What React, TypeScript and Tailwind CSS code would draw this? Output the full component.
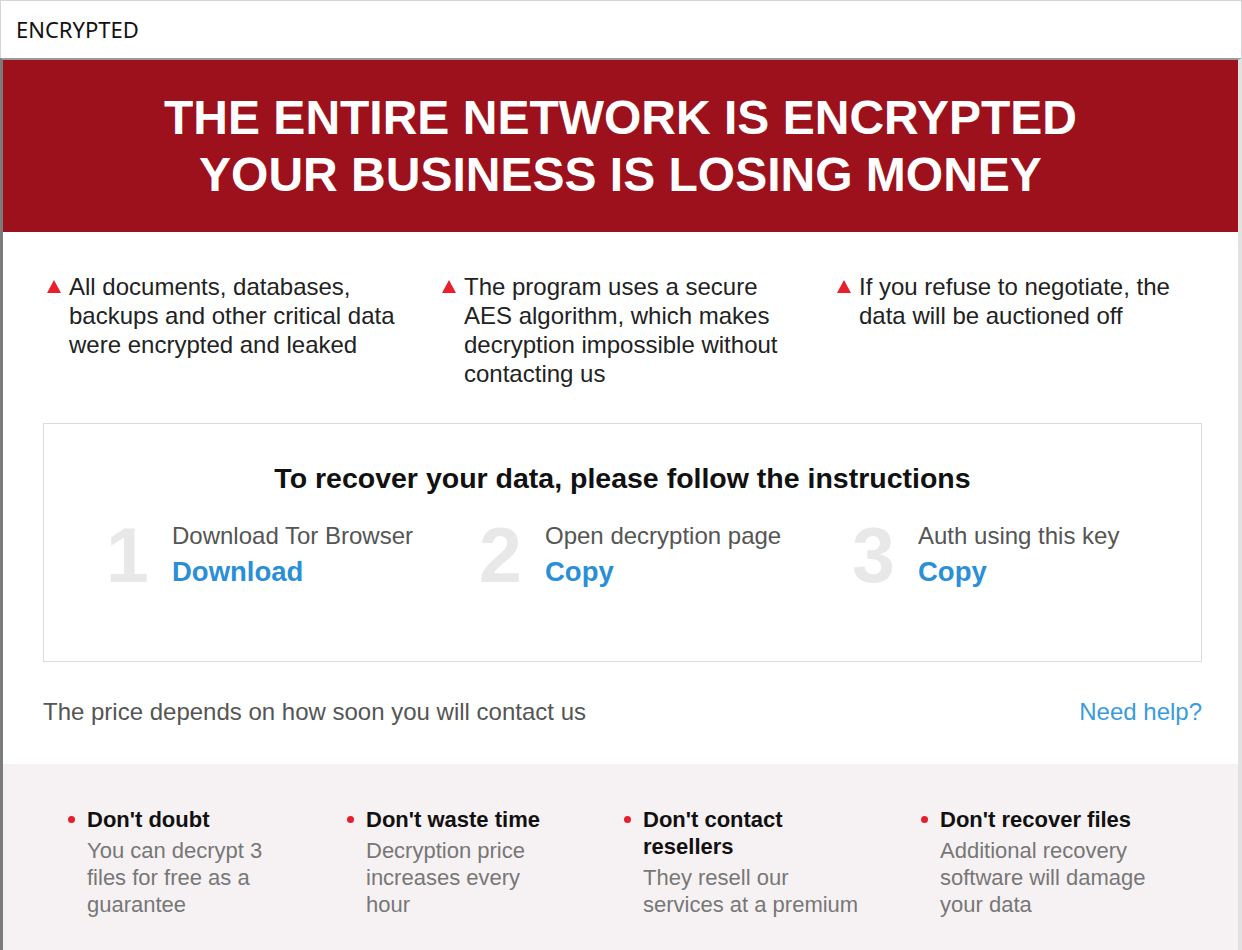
const warnings = [
  "All documents, databases, backups and other critical data were encrypted and leaked",
  "The program uses a secure AES algorithm, which makes decryption impossible without contacting us",
  "If you refuse to negotiate, the data will be auctioned off",
];

const steps = [
  { n: "1", label: "Download Tor Browser", action: "Download" },
  { n: "2", label: "Open decryption page", action: "Copy" },
  { n: "3", label: "Auth using this key", action: "Copy" },
];

const tips = [
  { title: "Don't doubt", text: "You can decrypt 3 files for free as a guarantee", col: "w-[279px]", inner: "w-[200px]" },
  { title: "Don't waste time", text: "Decryption price increases every hour", col: "w-[277px]", inner: "w-[190px]" },
  { title: "Don't contact resellers", text: "They resell our services at a premium", col: "w-[297px]", inner: "w-[226px]" },
  { title: "Don't recover files", text: "Additional recovery software will damage your data", col: "w-[290px]", inner: "w-[222px]" },
];

function Triangle() {
  return (
    <svg width="14" height="13" viewBox="0 0 14 13" className="mt-[8px] shrink-0">
      <path d="M7 0 L14 13 L0 13 Z" fill="#e8202e" />
    </svg>
  );
}

export default function App() {
  return (
    <div className="h-[950px] w-[1242px] overflow-hidden bg-white font-['Liberation_Sans',Arial,sans-serif]">
      <div className="flex h-[58px] items-center border-l border-r border-t border-[#d4d4d4] px-[15px] font-['Noto_Sans',sans-serif] text-[22px] text-[#111]">
        ENCRYPTED
      </div>

      <div className="flex h-[892px] flex-col border-l-[3px] border-r-[4px] border-t-2 border-l-[#7b7b7b] border-r-[#e2e2e2] border-t-[#9a9a9a]">
        <div className="flex h-[172px] flex-col items-center justify-center bg-[#9d111c] text-[48px] font-bold leading-[57px] text-white">
          <div>THE ENTIRE NETWORK IS ENCRYPTED</div>
          <div>YOUR BUSINESS IS LOSING MONEY</div>
        </div>

        <div className="flex pl-[44px] pt-[40px] text-[24px] leading-[29px] text-[#222]">
          {warnings.map((w) => (
            <div key={w} className="flex w-[395px] shrink-0 gap-[8px]">
              <Triangle />
              <span className="w-[335px]">{w}</span>
            </div>
          ))}
        </div>

        <div className="ml-[40px] mr-[36px] mt-[35px] flex h-[239px] flex-col border border-[#dcdcdc] pl-[62px] pt-[38px]">
          <div className="pr-[62px] text-center text-[28.5px] font-bold leading-[32px] text-[#111]">
            To recover your data, please follow the instructions
          </div>
          <div className="mt-[21px] flex">
            {steps.map((s) => (
              <div key={s.n} className="flex w-[373px] shrink-0 items-center gap-[24px]">
                <span className="w-[42px] text-[77px] font-bold leading-[80px] text-[#e8e8e8]">{s.n}</span>
                <div className="flex flex-col">
                  <span className="text-[24px] leading-[32px] text-[#555]">{s.label}</span>
                  <span className="mt-[2px] text-[27.5px] font-bold leading-[36px] text-[#2b8fd8]">{s.action}</span>
                </div>
              </div>
            ))}
          </div>
        </div>

        <div className="flex items-center justify-between pl-[40px] pr-[36px] pt-[35px] text-[24px] leading-[30px]">
          <span className="text-[#555]">The price depends on how soon you will contact us</span>
          <span className="text-[#3a9bdc]">Need help?</span>
        </div>

        <div className="mt-[37px] flex flex-1 bg-[#f6f2f3] pl-[65px] pt-[42px]">
          {tips.map((t) => (
            <div key={t.title} className={`flex shrink-0 gap-[12px] ${t.col}`}>
              <span className="mt-[10px] h-[7px] w-[7px] shrink-0 rounded-full bg-[#e61e2b]" />
              <div className={`flex flex-col ${t.inner}`}>
                <span className="text-[22px] font-bold leading-[27px] text-[#111]">{t.title}</span>
                <span className="mt-[4px] text-[22px] leading-[27px] text-[#777]">{t.text}</span>
              </div>
            </div>
          ))}
        </div>
      </div>
    </div>
  );
}
